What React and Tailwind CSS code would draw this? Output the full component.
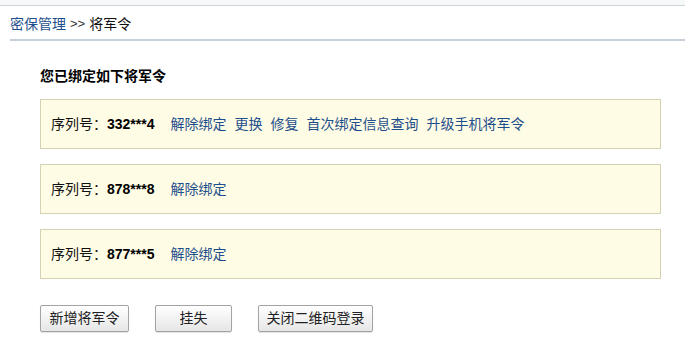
const font = { fontFamily: '"Liberation Sans", "Noto Sans CJK SC", sans-serif' };

const tokens = [
  { serial: "332***4", links: ["解除绑定", "更换", "修复", "首次绑定信息查询", "升级手机将军令"] },
  { serial: "878***8", links: ["解除绑定"] },
  { serial: "877***5", links: ["解除绑定"] },
];

const Btn = ({ children, className = "" }) => (
  <button
    className={
      "h-[27px] px-0 whitespace-nowrap rounded-[2px] border border-[#a3a3a3] bg-gradient-to-b from-white to-[#e6e6e6] text-[14px] text-[#222] shadow-[0_1px_1px_rgba(0,0,0,0.12)] " +
      className
    }
  >
    {children}
  </button>
);

export default function App() {
  return (
    <div className="w-[685px] h-[343px] bg-white overflow-hidden text-[14px] text-[#111]" style={font}>
      <div className="h-[5px] bg-[#f6f8f9]" />
      <div className="border-t border-[#c9d7d7]" />
      <div className="ml-[10px] h-[35px] pt-[3px] flex items-center border-b-2 border-[#c7d0d8]">
        <span className="text-[#1e4f8d] cursor-pointer">密保管理</span>
        <span className="ml-[4px] text-[#333] text-[13px]">&gt;&gt;</span>
        <span className="ml-[4px]">将军令</span>
      </div>
      <div className="pl-[40px] pr-[24px]">
        <h1 className="mt-[25px] h-[20px] leading-[20px] font-bold text-[14px] text-black">您已绑定如下将军令</h1>
        <div className="mt-[13px] flex flex-col gap-[15px]">
          {tokens.map((t) => (
            <div
              key={t.serial}
              className="h-[50px] flex items-center pl-[10px] border border-[#d5d1b3] bg-[#fefce4]"
            >
              <span>序列号：</span>
              <span className="font-bold text-[14px] text-black">{t.serial}</span>
              <div className="ml-[16px] flex gap-[8px]">
                {t.links.map((l) => (
                  <a key={l} className="text-[#1e4f8d] cursor-pointer">
                    {l}
                  </a>
                ))}
              </div>
            </div>
          ))}
        </div>
        <div className="mt-[26px] flex gap-[26px]">
          <Btn className="w-[89px]">新增将军令</Btn>
          <Btn className="w-[77px]">挂失</Btn>
          <Btn className="w-[115px]">关闭二维码登录</Btn>
        </div>
      </div>
    </div>
  );
}
